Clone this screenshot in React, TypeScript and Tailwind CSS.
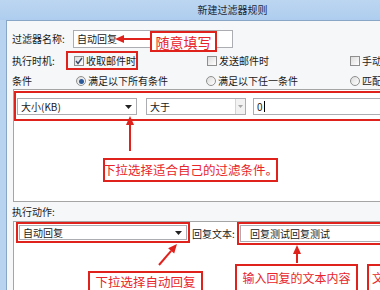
import React from "react";

const RED = "#e0221c";

function CheckBox({ checked }: { checked?: boolean }) {
  return (
    <span className="flex h-[10px] w-[10px] shrink-0 items-center justify-center border border-[#8f8f8f] bg-gradient-to-br from-[#dcdcdc] to-white">
      {checked && (
        <svg width="8" height="8" viewBox="0 0 8 8">
          <path d="M1 4 L3 6.5 L7 1" fill="none" stroke="#3a4a6a" strokeWidth="1.4" />
        </svg>
      )}
    </span>
  );
}

function Radio({ checked }: { checked?: boolean }) {
  return (
    <span className="flex h-[10px] w-[10px] shrink-0 items-center justify-center rounded-full border border-[#8f8f8f] bg-gradient-to-br from-[#dcdcdc] to-white">
      {checked && <span className="h-[5px] w-[5px] rounded-full bg-[#2d5a9a]" />}
    </span>
  );
}

function DownArrow({ color = "#222" }: { color?: string }) {
  return (
    <svg width="7" height="4" viewBox="0 0 7 4">
      <path d="M0 0 L7 0 L3.5 4 Z" fill={color} />
    </svg>
  );
}

function Arrow({ x1, y1, x2, y2 }: { x1: number; y1: number; x2: number; y2: number }) {
  // arrow drawn from (x1,y1) to head at (x2,y2)
  const ang = Math.atan2(y2 - y1, x2 - x1);
  const len = 9;
  const w = 4;
  const bx = x2 - Math.cos(ang) * len;
  const by = y2 - Math.sin(ang) * len;
  const px = -Math.sin(ang) * w;
  const py = Math.cos(ang) * w;
  return (
    <svg className="pointer-events-none absolute left-0 top-0" width="380" height="290">
      <line x1={x1} y1={y1} x2={bx} y2={by} stroke={RED} strokeWidth="2" />
      <polygon points={`${x2},${y2} ${bx + px},${by + py} ${bx - px},${by - py}`} fill={RED} />
    </svg>
  );
}

export default function App() {
  return (
    <div className="relative h-[290px] w-[380px] overflow-hidden bg-[#b8d3ef] font-['Noto_Sans_CJK_SC',sans-serif] text-[10px] leading-none text-[#1a1a1a]">
      <div className="w-[465px]">
        {/* title bar */}
        <div className="flex h-[20px] items-center justify-center bg-gradient-to-b from-[#bcd6f1] to-[#aecdee] text-[10px] text-[#1b2838]">
          新建过滤器规则
        </div>

        <div className="ml-[6px] h-[270px] border-l border-t border-[#8aa6c6] bg-[#f6f7f9] pl-[5px] pt-[9px]">
          {/* name */}
          <div className="flex h-[18px] items-center">
            <span className="w-[61px]">过滤器名称:</span>
            <div className="flex h-[18px] w-[160px] items-center border border-[#abadb3] bg-white pl-[3px]">
              自动回复
            </div>
          </div>

          {/* timing */}
          <div className="mt-[3px] flex h-[19px] items-center">
            <span className="w-[54px]">执行时机:</span>
            <div className="flex h-[19px] w-[72px] items-center gap-[2px] border-2 border-[#e0221c] pl-[6px]">
              <CheckBox checked />
              <span>收取邮件时</span>
            </div>
            <div className="ml-[69px] flex w-[143px] items-center gap-[2px]">
              <CheckBox />
              <span>发送邮件时</span>
            </div>
            <div className="flex items-center gap-[2px]">
              <CheckBox />
              <span>手动运行时</span>
            </div>
          </div>

          {/* conditions mode */}
          <div className="mt-[3px] flex h-[16px] items-center">
            <span className="w-[64px]">条件</span>
            <div className="flex w-[130px] items-center gap-[2px]">
              <Radio checked />
              <span>满足以下所有条件</span>
            </div>
            <div className="flex w-[144px] items-center gap-[2px]">
              <Radio />
              <span>满足以下任一条件</span>
            </div>
            <div className="flex items-center gap-[2px]">
              <Radio />
              <span>匹配所有邮件</span>
            </div>
          </div>

          {/* conditions panel */}
          <div className="ml-[1px] h-[113px] border border-[#a5a5a5] bg-white pt-[1px]">
            <div className="flex h-[30px] items-start border-2 border-[#e0221c] pl-[1px] pt-[5px]">
              <div className="flex h-[17px] w-[120px] items-center justify-between border border-[#abadb3] bg-white pl-[3px] pr-[4px]">
                <span>大小(KB)</span>
                <DownArrow />
              </div>
              <div className="ml-[9px] flex h-[17px] w-[100px] items-center justify-between border border-[#abadb3] bg-white pl-[3px]">
                <span>大于</span>
                <span className="flex h-[15px] w-[10px] items-center justify-center border-l border-[#d4d4d4] bg-[#f2f2f2]">
                  <svg width="5" height="3" viewBox="0 0 5 3">
                    <path d="M0 0 L5 0 L2.5 3 Z" fill="#a8a8a8" />
                  </svg>
                </span>
              </div>
              <div className="ml-[7px] flex h-[17px] flex-1 items-center border border-[#abadb3] bg-white pl-[3px]">
                <span>0</span>
                <span className="ml-px h-[11px] w-px bg-black" />
              </div>
            </div>
          </div>

          {/* action */}
          <div className="flex h-[19px] items-center">执行动作:</div>
          <div className="ml-[1px] h-[80px] border-l border-t border-[#a5a5a5] bg-white">
            <div className="flex items-start">
              <div className="ml-[2px] h-[21px] w-[174px] border-2 border-[#e0221c] p-px">
                <div className="flex h-[15px] items-center justify-between border border-[#abadb3] bg-white pl-[3px] pr-[4px]">
                  <span>自动回复</span>
                  <DownArrow />
                </div>
              </div>
              <span className="ml-[2px] flex h-[23px] w-[45px] items-center">回复文本:</span>
              <div className="h-[23px] flex-1 border-2 border-[#e0221c] p-px">
                <div className="flex h-[17px] items-center border border-[#abadb3] bg-white pl-[9px]">
                  回复测试回复测试
                </div>
              </div>
            </div>
          </div>
        </div>
      </div>

      {/* annotations */}
      <Arrow x1={150} y1={39} x2={115} y2={39} />
      <div className="absolute left-[150px] top-[31px] flex h-[21px] w-[67px] items-center justify-center whitespace-nowrap border-2 border-[#e0221c] bg-white text-[14px] text-[#e8252a]">
        随意填写
      </div>

      <Arrow x1={130} y1={151} x2={130} y2={116} />
      <div className="absolute left-[103px] top-[158px] flex h-[24px] w-[175px] items-center justify-center whitespace-nowrap border-2 border-[#e0221c] bg-white text-[12.5px] text-[#e8252a]">
        下拉选择适合自己的过滤条件。
      </div>

      <Arrow x1={159} y1={265} x2={177} y2={244} />
      <div className="absolute left-[88px] top-[271px] flex h-[24px] w-[115px] items-start justify-center whitespace-nowrap border-2 border-[#e0221c] bg-white pt-[3px] text-[12.5px] text-[#e8252a]">
        下拉选择自动回复
      </div>

      <Arrow x1={297} y1={263} x2={297} y2={245} />
      <div className="absolute left-[235px] top-[264px] flex h-[28px] w-[123px] items-center justify-center whitespace-nowrap border-2 border-[#e0221c] bg-white text-[12px] text-[#e8252a]">
        输入回复的文本内容
      </div>
      <div className="absolute left-[367px] top-[264px] flex h-[28px] w-[40px] items-center whitespace-nowrap border-2 border-[#e0221c] bg-white pl-[3px] text-[12px] text-[#e8252a]">
        文本
      </div>
    </div>
  );
}
